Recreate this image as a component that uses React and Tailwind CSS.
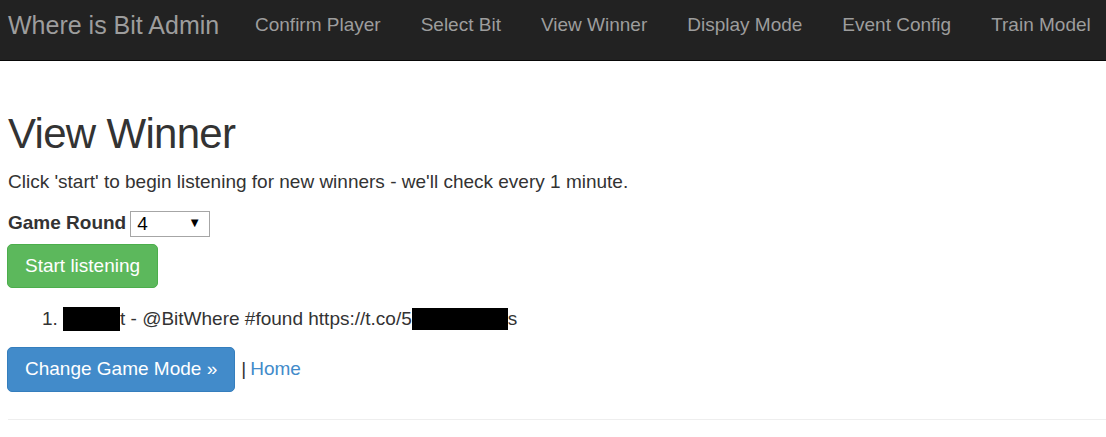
import { useState } from "react";

const navLinks = [
  "Confirm Player",
  "Select Bit",
  "View Winner",
  "Display Mode",
  "Event Config",
  "Train Model",
];

const App = () => {
  const [round, setRound] = useState("4");

  return (
    <div className="min-h-[437px] bg-white font-['Liberation_Sans',Arial,sans-serif] text-[19px] text-[#333] overflow-hidden">
      {/* Navbar */}
      <nav className="h-[61px] bg-[#222] border-b border-[#080808] flex items-start">
        <a className="w-[235px] shrink-0 pl-[8px] pt-[10px] text-[25px] leading-[30px] text-[#9d9d9d] whitespace-nowrap">
          Where is Bit Admin
        </a>
        <ul className="flex">
          {navLinks.map((link) => (
            <li key={link}>
              <a className="block px-[20px] pt-[12px] leading-[26px] text-[#9d9d9d] whitespace-nowrap">
                {link}
              </a>
            </li>
          ))}
        </ul>
      </nav>

      {/* Content */}
      <div className="px-[8px]">
        <h1 className="mt-[49px] text-[42px] leading-[48px] tracking-[-0.7px] font-normal text-[#333]">
          View Winner
        </h1>
        <p className="mt-[11px] leading-[26px]">
          Click 'start' to begin listening for new winners - we'll check every 1
          minute.
        </p>

        <div className="mt-[15px] flex items-center gap-[4px] h-[26px]">
          <label className="font-bold leading-[26px]">Game Round</label>
          <div className="relative w-[80px] h-[26px]">
            <select
              value={round}
              onChange={(e) => setRound(e.target.value)}
              className="appearance-none w-full h-full border border-[#a6a6a6] pl-[6px] text-[19px] leading-[24px] bg-white text-black"
            >
              <option>1</option>
              <option>2</option>
              <option>3</option>
              <option>4</option>
            </select>
            <span className="absolute right-[9px] top-[5px] text-[13px] leading-[16px] text-black pointer-events-none">
              ▼
            </span>
          </div>
        </div>

        <button className="-ml-[1px] mt-[8px] h-[44px] px-[17px] rounded-[5px] bg-[#5cb85c] border border-[#4cae4c] text-white text-[19px]">
          Start listening
        </button>

        <ol className="mt-[18px] pl-[55px] list-decimal leading-[26px]">
          <li>
            <span className="inline-block w-[57px] h-[24px] bg-black align-[-6px]" />
            t - @BitWhere #found https://t.co/5
            <span className="inline-block w-[96px] h-[22px] bg-black align-[-5px]" />
            s
          </li>
        </ol>

        <div className="mt-[15px] flex items-center">
          <button className="-ml-[1px] h-[45px] px-[17px] rounded-[5px] bg-[#428bca] border border-[#357ebd] text-white text-[19px]">
            Change Game Mode »
          </button>
          <span className="ml-[6px]">|</span>
          <a className="ml-[4px] text-[#428bca]">Home</a>
        </div>

        <hr className="mt-[27px] -mr-[8px] border-t border-[#eee]" />
      </div>
    </div>
  );
};

export default App;
